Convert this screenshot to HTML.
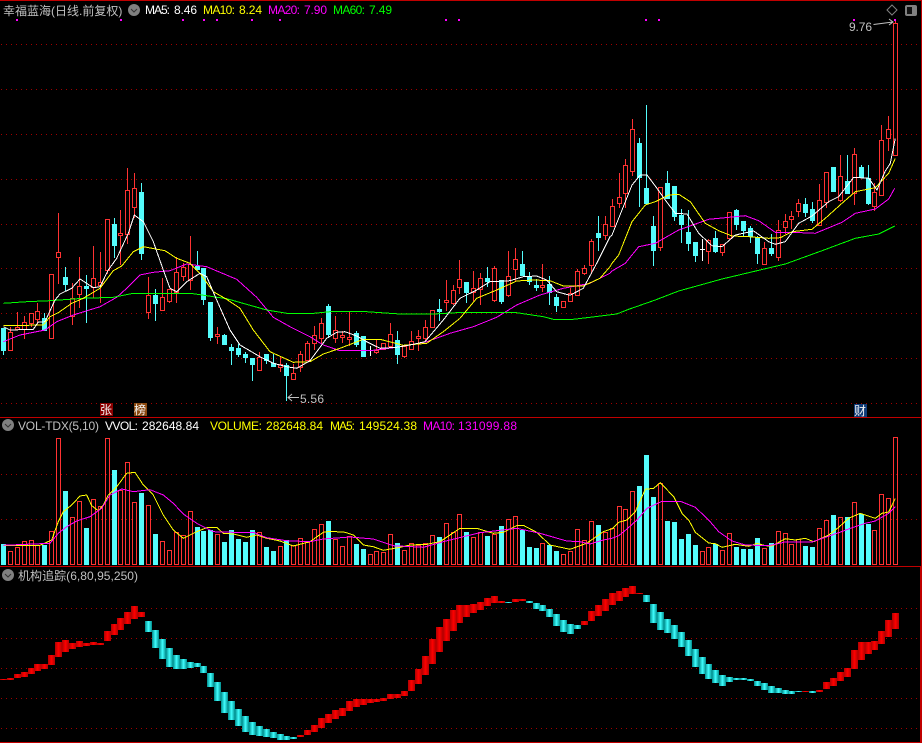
<!DOCTYPE html>
<html><head><meta charset="utf-8"><style>
html,body{margin:0;padding:0;background:#000;width:922px;height:743px;overflow:hidden}
svg{display:block;position:absolute;left:0;top:0}
text{font-family:"Liberation Sans","Noto Sans CJK SC",sans-serif;font-size:12px}
</style></head><body>
<svg id="s" width="922" height="743" viewBox="0 0 922 743">
<defs>
<linearGradient id="gr" x1="0" x2="1" y1="0" y2="0"><stop offset="0" stop-color="#b00000"/><stop offset=".5" stop-color="#ff0000"/><stop offset="1" stop-color="#b00000"/></linearGradient>
<linearGradient id="gc" x1="0" x2="1" y1="0" y2="0"><stop offset="0" stop-color="#008c8c"/><stop offset=".5" stop-color="#40ffff"/><stop offset="1" stop-color="#008c8c"/></linearGradient>
</defs>
<rect width="922" height="743" fill="#000"/>
<g id="grid" shape-rendering="crispEdges"></g>
<g id="main" shape-rendering="crispEdges"></g>
<g id="vol" shape-rendering="crispEdges"></g>
<g id="ind" shape-rendering="crispEdges"></g>
<g id="lines" fill="none" stroke-width="1" shape-rendering="crispEdges"></g>
<rect x="0" y="0" width="922" height="1" fill="#c00000"/>
<rect x="0" y="417" width="922" height="1" fill="#c00000"/>
<rect x="0" y="566" width="922" height="1" fill="#c00000"/>
<rect x="0" y="742" width="922" height="1" fill="#c00000"/>
<rect x="921" y="0" width="1" height="566" fill="#c00000"/>
<rect x="920" y="566" width="2" height="177" fill="#c00000"/>

<text x="3" y="15" fill="#c0c0c0">幸福蓝海(日线.前复权)</text>
<circle cx="134" cy="10" r="6" fill="#808080"/><path d="M131 9l3 3 3-3" stroke="#333" fill="none"/>
<text x="145" y="14" fill="#fff" textLength="25">MA5:</text><text x="174" y="14" fill="#fff" textLength="23">8.46</text>
<text x="203" y="14" fill="#ff0" textLength="32">MA10:</text><text x="239" y="14" fill="#ff0" textLength="23">8.24</text>
<text x="268" y="14" fill="#f0f" textLength="32">MA20:</text><text x="304" y="14" fill="#f0f" textLength="23">7.90</text>
<text x="333" y="14" fill="#0f0" textLength="32">MA60:</text><text x="369" y="14" fill="#0f0" textLength="23">7.49</text>
<path d="M892 5l5 5-5 5-5-5z" fill="none" stroke="#808080"/>
<rect x="905" y="5" width="12" height="11" rx="2" fill="#808080"/><rect x="907" y="7" width="5" height="7" fill="#111"/>
<text x="849" y="31" fill="#c0c0c0" textLength="23">9.76</text>
<path d="M873.5 24.5L893 22M889 19l4 3-4 3" stroke="#c0c0c0" fill="none"/>
<text x="300" y="403" fill="#c0c0c0" textLength="24">5.56</text>
<path d="M299 397.5H288M292 394l-4 3.500 4 3.500" stroke="#c0c0c0" fill="none"/>

<rect x="100" y="403" width="13" height="13" fill="#8b0000"/><text x="100" y="414" fill="#f0f0f0" style="font-size:12px">张</text>
<rect x="134" y="403" width="13" height="13" fill="#8b4a10"/><text x="134" y="414" fill="#f0f0f0" style="font-size:12px">榜</text>
<rect x="854" y="404" width="13" height="13" fill="#103c78"/><text x="854" y="415" fill="#f0f0f0" style="font-size:12px">财</text>

<circle cx="8" cy="425" r="6" fill="#808080"/><path d="M5 424l3 3 3-3" stroke="#333" fill="none"/>
<text x="18" y="430" fill="#c0c0c0" textLength="81">VOL-TDX(5,10)</text>
<text x="105" y="430" fill="#fff" textLength="33">VVOL:</text><text x="142" y="430" fill="#fff" textLength="57">282648.84</text>
<text x="210" y="430" fill="#ff0" textLength="52">VOLUME:</text><text x="266" y="430" fill="#ff0" textLength="57">282648.84</text>
<text x="330" y="430" fill="#ff0" textLength="25">MA5:</text><text x="359" y="430" fill="#ff0" textLength="58">149524.38</text>
<text x="423" y="430" fill="#f0f" textLength="32">MA10:</text><text x="458" y="430" fill="#f0f" textLength="59">131099.88</text>

<circle cx="8" cy="575" r="6" fill="#808080"/><path d="M5 574l3 3 3-3" stroke="#333" fill="none"/>
<text x="18" y="580" fill="#c0c0c0" textLength="120">机构追踪(6,80,95,250)</text>
<g id="dots" fill="#f0f"></g>
</svg>
<script>
var X=function(i){return Math.floor(3.4+6.917*i)};
var R='#ff3232',C='#54fcfc';
var g='';
[44,89,134,179,224,268,313,358,403,474,519,608,638,668,698,728].forEach(function(y){g+='<path d="M1 '+(y+.5)+'H920" stroke="#a00000" stroke-dasharray="1 4"/>'});
document.getElementById('grid').innerHTML=g;
var d='';[17,121,183,204,217,252,280,446,459,646,659,854,895].forEach(function(x){d+='<rect x="'+(x-1)+'" y="19" width="2" height="2"/>'});
document.getElementById('dots').innerHTML=d;
var cs="c 328 328 350 354|r 327 332 350 350|r 312 327 329 329|r 316 322 329 338|r 313 313 323 326|r 303 311 319 323|c 313 318 330 330|r 274 274 338 338|r 213 252 257 283|c 267 277 284 290|r 283 298 316 324|r 257 286 294 307|c 275 286 288 322|r 246 278 287 297|r 252 282 285 302|r 219 219 270 273|c 218 224 245 257|r 210 233 235 264|r 168 190 234 243|r 173 188 207 217|c 183 192 253 259|r 277 295 312 318|c 289 295 303 320|r 278 297 310 310|r 289 289 301 302|r 257 272 292 302|r 263 267 276 280|r 236 264 280 289|c 251 266 269 269|c 268 268 299 304|c 302 302 337 340|r 327 334 336 343|c 334 335 344 344|c 344 347 350 364|c 344 348 354 356|c 352 354 357 362|c 358 358 364 380|r 352 357 370 370|c 354 354 360 363|c 354 363 366 366|r 356 364 367 371|c 363 365 375 400|r 364 373 379 379|r 351 354 367 371|r 341 343 360 360|r 326 335 343 349|r 318 323 338 343|c 304 306 334 337|r 316 330 338 342|r 331 335 337 342|r 312 337 339 345|c 331 333 344 346|c 336 336 356 356|w 346 350 351 355|r 340 350 352 353|r 343 343 349 349|r 323 334 346 346|c 331 340 354 363|r 346 346 356 357|r 331 341 349 349|r 330 336 338 350|r 320 327 338 341|r 310 310 327 327|c 299 309 311 320|r 280 300 302 310|r 285 290 303 304|r 260 279 287 293|c 282 282 292 302|r 271 288 292 300|r 273 278 289 304|c 267 278 281 286|r 266 268 300 301|c 280 280 301 303|r 251 276 295 296|r 248 259 269 281|c 251 264 275 275|c 272 276 281 284|c 279 285 287 290|r 264 285 287 291|c 276 284 292 304|c 294 297 305 311|r 301 301 307 307|r 288 293 301 301|r 269 271 295 295|r 265 268 273 274|r 239 241 265 273|c 216 233 237 250|r 216 224 235 239|r 199 206 226 226|r 173 197 203 207|r 159 165 193 207|r 119 129 171 175|c 138 143 177 206|c 105 188 203 203|c 216 226 250 265|r 187 187 247 250|c 171 183 198 198|c 186 186 216 220|c 209 215 224 242|c 210 232 243 250|c 242 242 255 261|w 239 249 250 260|r 239 240 251 263|c 231 238 251 252|r 244 244 252 255|r 212 212 238 238|c 209 210 224 229|c 221 221 230 235|c 226 228 236 242|c 236 237 253 263|r 242 248 264 264|c 234 248 253 255|r 220 230 257 260|r 214 221 227 233|r 211 216 219 228|r 199 203 211 216|c 198 204 212 216|c 202 209 220 222|r 184 200 225 225|r 172 172 202 207|c 167 167 191 191|r 155 176 200 201|c 155 181 193 193|r 148 154 193 204|c 165 167 177 177|c 165 178 203 204|r 183 192 206 210|r 125 140 195 195|r 116 129 138 150|r 20 23 155 155".split('|');
var m='';
cs.forEach(function(s,i){var a=s.split(' '),k=a[0],h=+a[1],t=+a[2],b=+a[3],l=+a[4],c=X(i);
 if(k=='c'){m+='<rect x="'+c+'" y="'+h+'" width="1" height="'+(l-h+1)+'" fill="'+C+'"/><rect x="'+(c-2)+'" y="'+t+'" width="5" height="'+(b-t+1)+'" fill="'+C+'"/>';}
 else if(k=='w'){m+='<rect x="'+c+'" y="'+h+'" width="1" height="'+(l-h+1)+'" fill="#fff"/><rect x="'+(c-2)+'" y="'+t+'" width="5" height="1" fill="#fff"/>';}
 else{ if(t>h)m+='<rect x="'+c+'" y="'+h+'" width="1" height="'+(t-h)+'" fill="'+R+'"/>';
  if(l>b)m+='<rect x="'+c+'" y="'+b+'" width="1" height="'+(l-b+1)+'" fill="'+R+'"/>';
  m+='<rect x="'+(c-1.5)+'" y="'+(t+.5)+'" width="4" height="'+(b-t)+'" fill="#000" stroke="'+R+'"/>';}
});
document.getElementById('main').innerHTML=m;
var vt=[544,551,547,541,540,545,545,531,438,491,517,501,528,499,506,438,470,490,462,502,493,505,534,541,550,532,535,511,527,531,530,534,542,530,539,542,530,532,547,551,546,540,545,538,542,529,524,521,539,546,536,544,549,554,551,552,534,543,550,543,545,543,535,537,523,532,514,532,537,532,536,534,526,519,516,530,547,548,543,545,551,554,551,529,540,521,525,532,528,506,509,491,486,455,497,483,521,522,539,534,545,551,547,544,550,533,547,549,549,538,548,543,531,533,544,539,546,547,528,520,515,517,517,502,514,524,530,494,498,437];
var vc={0:1,6:1,9:1,12:1,16:1,20:1,22:1,28:1,29:1,30:1,32:1,33:1,34:1,35:1,36:1,38:1,39:1,41:1,47:1,51:1,52:1,57:1,63:1,67:1,70:1,72:1,75:1,76:1,77:1,79:1,80:1,86:1,92:1,93:1,94:1,96:1,97:1,98:1,99:1,100:1,103:1,106:1,107:1,108:1,109:1,111:1,116:1,117:1,120:1,122:1,124:1,125:1};
var v='';
vt.forEach(function(t,i){var c=X(i);
 if(vc[i])v+='<rect x="'+(c-2)+'" y="'+t+'" width="5" height="'+(565-t)+'" fill="'+C+'"/>';
 else v+='<rect x="'+(c-1.5)+'" y="'+(t+.5)+'" width="4" height="'+(564-t)+'" fill="none" stroke="'+R+'"/>';
});
document.getElementById('vol').innerHTML=v;
var it="342 344,339 344,327 340,321 335,309 327,297 318,297 312,270 300,231 276,225 261,234 252,228 246,234 243,231 240,234 240,198 228,177 210,159 195,141 177,123 162,141 156,168 201,195 249,222 282,249 306,270 312,282 312,291 309,294 306,303 324,324 366,351 408,381 444,408 465,432 483,453 501,471 510,483 513,492 516,501 519,507 525,513 525,516 522,510 516,495 510,480 501,459 489,447 474,435 462,429 453,408 438,402 426,402 420,402 414,402 411,399 408,387 402,387 399,378 393,345 378,312 357,273 330,222 297,186 261,162 228,135 198,120 174,120 156,117 144,111 135,99 123,93 114,108 114,111 114,102 111,102 108,108 114,114 132,120 138,132 156,147 183,165 201,177 207,180 192,168 180,138 168,120 153,102 138,84 120,78 108,69 96,63 87,84 87,90 111,117 174,141 195,162 204,180 222,201 246,225 273,252 306,276 327,297 342,315 354,330 363,336 351,339 345,339 345,342 348,348 363,354 375,363 384,369 384,375 387,378 387,378 381,378 381,378 384,375 381,351 372,339 363,321 348,309 336,255 312,231 285,231 267,228 255,198 237,165 216,144 192".split(',');
function isC(i){return (i>=21&&i<=42)||i==73||(i>=76&&i<=83)||(i>=93&&i<=115)||i==117}
var n='';
it.forEach(function(s,i){var a=s.split(' '),t=565+a[0]/3,b=565+a[1]/3;
 n+='<rect x="'+(X(i)-3)+'" y="'+Math.round(t)+'" width="7" height="'+Math.max(1,Math.round(b-t))+'" fill="url(#'+(isC(i)?'gc':'gr')+')"/>';
});
document.getElementById('ind').innerHTML=n;
function P(segs){var o=[];segs.forEach(function(sg){var x0=sg[0],y0=sg[1],a=sg[2].split(' ');a.forEach(function(p){var q=p.split(',');o.push((x0+q[0]/3).toFixed(1)+','+(y0+q[1]/3).toFixed(1))})});return o.join(' ')}
var L=[
['#f0f',P([[0,210,"10,395 60,375 135,360 170,335 220,315 300,290 350,262 380,235 420,195 460,187 510,182 560,162 620,170 710,208 770,262 820,322 870,350 930,380"],[310,210,"40,405 90,422 180,422 260,412 350,395 420,370 490,350 560,322 620,285 690,255 760,235 840,220 900,190"],[612,100,"0,513 40,490 80,440 130,430 200,390 290,358 400,347 440,362 490,397 540,397 610,400 690,367 730,340 790,327 830,297 848,265"]])],
['#0f0',P([[0,210,"10,280 80,275 150,272 250,265 340,262 400,250 580,251 680,266 800,300 860,310 930,311"],[310,210,"60,305 170,305 270,312 370,312 440,308 620,308 700,320 730,328 790,328 830,323 920,312"],[612,100,"50,628 130,600 200,573 330,537 520,492 630,452 730,415 800,402 848,378"]])],
['#ff0',P([[0,210,"10,347 130,345 150,320 175,308 215,280 250,265 300,235 340,182 365,168 400,125 430,110 495,122 530,145 570,160 600,190 640,245 680,268 720,295 760,360 810,425 880,457 930,455"],[310,210,"40,432 90,415 160,388 210,388 280,406 350,400 400,365 450,325 500,265 560,240 620,213 670,210 720,212 760,228 820,228 870,205 900,170"],[612,100,"0,490 20,465 60,365 100,315 130,305 170,285 200,283 235,305 280,370 320,392 360,408 410,410 470,415 505,413 540,395 600,388 640,355 690,310 730,275 790,263 830,220 850,175"]])],
['#fff',P([[0,210,"10,350 30,360 100,358 115,336 135,335 165,270 180,252 215,235 240,207 280,233 300,230 325,180 350,145 385,70 403,15 430,35 460,95 490,180 510,235 530,245 560,215 600,190 620,200 650,270 690,360 720,405 780,440 820,460 860,470 890,475 930,452"],[310,210,"50,385 80,367 105,365 140,378 170,395 210,415 260,412 300,405 345,395 400,330 450,265 500,240 540,215 600,212 640,200 680,198 710,210 740,245 780,256 820,235 860,160 900,80"],[612,100,"0,405 30,330 60,255 85,225 105,225 130,258 160,300 190,340 225,342 260,400 300,437 330,440 370,405 425,393 470,425 490,433 520,425 560,370 600,348 650,305 680,290 725,232 770,235 795,270 820,213 835,190 850,115"]])],
['#ff0',P([[0,415,"10,392 120,391 155,375 175,320 190,290 215,270 240,243 260,240 275,272 295,287 310,270 325,240 350,215 380,175 405,172 430,210 460,240 490,300 520,345 550,370 590,350 620,338 650,337 670,355 700,357 740,367 770,360 800,370 840,378 880,393 930,380"],[310,415,"40,352 60,349 105,352 130,360 160,390 190,395 220,406 270,397 300,390 350,388 390,380 420,360 450,340 500,340 550,355 580,352 620,332 640,331 680,352 720,390 780,403 830,385 880,350 910,340"],[612,415,"0,342 20,322 45,315 70,290 100,223 125,220 145,203 185,245 210,295 230,315 250,352 290,384 310,386 330,397 370,388 410,394 435,385 460,392 480,393 520,371 550,375 580,370 605,380 650,360 680,337 710,310 745,295 790,310 810,295 830,291 850,250"]])],
['#f0f',P([[0,415,"10,391 150,385 175,355 200,335 230,318 270,305 305,280 330,240 365,222 400,230 450,224 490,240 520,265 550,297 590,325 640,350 700,352 760,352 800,368 860,377 930,380"],[310,415,"40,372 120,366 190,372 250,392 340,397 400,380 460,365 510,353 560,347 620,340 690,355 770,378 810,380 840,387 880,375"],[612,415,"0,370 20,362 45,342 75,315 105,280 150,259 205,259 250,277 290,315 320,350 360,378 400,390 470,392 520,381 600,381 640,367 680,353 720,338 760,325 790,318 830,295 850,275"]])]
];
var ln='';L.forEach(function(l){ln+='<polyline points="'+l[1]+'" stroke="'+l[0]+'"/>'});
document.getElementById('lines').innerHTML=ln;
</script>
</body></html>
